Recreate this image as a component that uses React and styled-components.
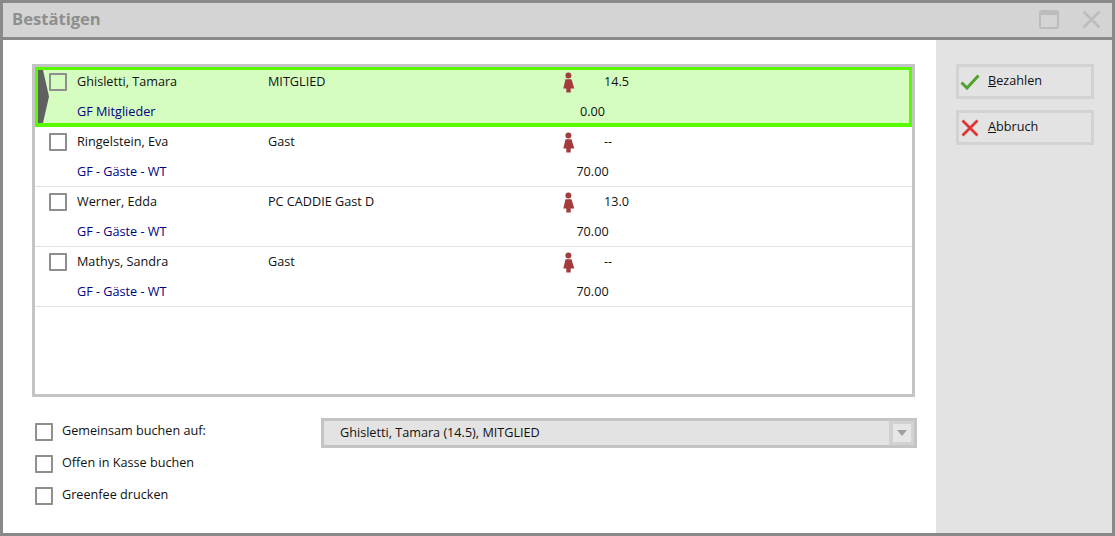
import React from "react";
import styled, { createGlobalStyle } from "styled-components";

const Global = createGlobalStyle`
  html, body { margin: 0; padding: 0; background: #fff; }
  body { font-family: "Open Sans", "Liberation Sans", sans-serif; font-size: 12.65px; color: #111; }
`;

const Window = styled.div`
  width: 1115px;
  height: 536px;
  box-sizing: border-box;
  border: 3px solid #898989;
  display: flex;
  flex-direction: column;
`;

const TitleBar = styled.div`
  height: 34px;
  flex: none;
  background: #d4d4d4;
  border-bottom: 3px solid #898989;
  display: flex;
  align-items: center;
  padding: 0 11px 0 9px;
`;

const Title = styled.div`
  flex: 1;
  font-size: 16.6px;
  font-weight: 700;
  color: #8e8e8e;
  margin-top: -4px;
`;

const TitleIcons = styled.div`
  display: flex;
  align-items: center;
  gap: 23px;
  margin-top: -2px;
`;

const Main = styled.div`
  flex: 1;
  display: flex;
  min-height: 0;
`;

const Content = styled.div`
  width: 933px;
  box-sizing: border-box;
  padding: 24px 19px 0 29px;
  background: #fff;
`;

const List = styled.div`
  width: 883px;
  height: 333px;
  box-sizing: border-box;
  border: 3px solid #c4c4c4;
`;

const Row = styled.div`
  position: relative;
  height: 60px;
  box-sizing: border-box;
  padding-left: 14px;
  background: ${(p) => (p.$active ? "#d5fdc0" : "#fff")};
  border-bottom: 1px solid ${(p) => (p.$active ? "#58fa00" : "#e2e2e2")};
  box-shadow: ${(p) => (p.$active ? "inset 3px 3px 0 #58fa00, inset -3px -3px 0 #58fa00" : "none")};
`;

const Marker = styled.svg`
  position: absolute;
  left: 3px;
  top: 3px;
`;

const Line = styled.div`
  height: 30px;
  box-sizing: border-box;
  padding-bottom: 2px;
  display: flex;
  align-items: center;
`;

const Box = styled.span`
  flex: none;
  width: 18px;
  height: 18px;
  box-sizing: border-box;
  border: 2px solid #8e8e8e;
  border-radius: 1px;
  margin-top: 2px;
  margin-right: ${(p) => p.$gap || 10}px;
`;

const Name = styled.span`
  width: 191px;
  flex: none;
`;

const Kind = styled.span`
  width: 295px;
  flex: none;
`;

const GenderCell = styled.span`
  width: 41px;
  flex: none;
  display: flex;
  margin-top: 2px;
`;

const Tariff = styled.span`
  width: 485px;
  flex: none;
  margin-left: 28px;
  color: #000080;
`;

const Price = styled.span`
  width: 61px;
  flex: none;
  text-align: center;
`;

const Options = styled.div`
  display: flex;
  margin-top: 21px;
  padding-left: 3px;
`;

const Checks = styled.div`
  width: 286px;
  flex: none;
  display: flex;
  flex-direction: column;
`;

const CheckRow = styled.div`
  height: 32px;
  box-sizing: border-box;
  padding-bottom: 2px;
  display: flex;
  align-items: center;
  margin-top: ${(p) => (p.$first ? "-2px" : "0")};
`;

const CheckLabel = styled.span`
  margin-top: -2px;
`;

const Combo = styled.div`
  width: 596px;
  height: 30px;
  box-sizing: border-box;
  border: 3px solid #c4c4c4;
  background: #e3e3e3;
  display: flex;
  align-items: center;
  justify-content: space-between;
  padding-left: 16px;
`;

const ComboText = styled.span`
  margin-top: -2px;
`;

const ComboButton = styled.div`
  width: 25px;
  height: 24px;
  box-sizing: border-box;
  border: 3px solid #d2d2d2;
  border-left: 4px solid #d0d0d0;
  background: #e6e6e6;
  display: flex;
  align-items: center;
  justify-content: center;
`;

const Arrow = styled.span`
  width: 0;
  height: 0;
  border-left: 5px solid transparent;
  border-right: 5px solid transparent;
  border-top: 6px solid #a0a0a0;
`;

const Side = styled.div`
  flex: 1;
  background: #e3e3e3;
  padding: 24px 0 0 20px;
  display: flex;
  flex-direction: column;
  gap: 11px;
`;

const Button = styled.div`
  width: 138px;
  height: 35px;
  box-sizing: border-box;
  border: 3px solid #d2d2d2;
  padding-bottom: 4px;
  display: flex;
  align-items: center;
  padding-left: 1px;
  gap: 8px;
`;

const IconSlot = styled.span`
  width: 20px;
  display: flex;
  justify-content: center;
  margin-top: 4px;
`;

const Key = styled.span`
  text-decoration: underline;
`;

const players = [
  { name: "Ghisletti, Tamara", kind: "MITGLIED", hcp: "14.5", tariff: "GF Mitglieder", price: "0.00", active: true },
  { name: "Ringelstein, Eva", kind: "Gast", hcp: "--", tariff: "GF - Gäste - WT", price: "70.00" },
  { name: "Werner, Edda", kind: "PC CADDIE Gast D", hcp: "13.0", tariff: "GF - Gäste - WT", price: "70.00" },
  { name: "Mathys, Sandra", kind: "Gast", hcp: "--", tariff: "GF - Gäste - WT", price: "70.00" },
];

function Lady() {
  return (
    <svg width="12" height="21" viewBox="0 0 12 21">
      <circle cx="5.4" cy="3.5" r="3" fill="#a33c3c" />
      <path d="M2.5 7.2h6l2.8 9.3H7.7v4H3.3v-4H.3z" fill="#a33c3c" />
    </svg>
  );
}

export default function App() {
  return (
    <Window>
      <Global />
      <TitleBar>
        <Title>Bestätigen</Title>
        <TitleIcons>
          <svg width="20" height="19" viewBox="0 0 20 19" fill="none">
            <rect x="1" y="1" width="18" height="17" rx="1.5" stroke="#bcbcbc" strokeWidth="2" />
            <rect x="1" y="1" width="18" height="4" fill="#bcbcbc" />
          </svg>
          <svg width="19" height="19" viewBox="0 0 19 19" fill="none">
            <path d="M1.5 1.5l16 16M17.5 1.5l-16 16" stroke="#bcbcbc" strokeWidth="2.6" />
          </svg>
        </TitleIcons>
      </TitleBar>
      <Main>
        <Content>
          <List>
            {players.map((p) => (
              <Row key={p.name} $active={p.active}>
                {p.active && (
                  <Marker width="11" height="53" viewBox="0 0 11 53">
                    <path d="M0 0h5l6 26.5L5 53H0z" fill="#606060" />
                  </Marker>
                )}
                <Line>
                  <Box />
                  <Name>{p.name}</Name>
                  <Kind>{p.kind}</Kind>
                  <GenderCell>
                    <Lady />
                  </GenderCell>
                  <span>{p.hcp}</span>
                </Line>
                <Line>
                  <Tariff>{p.tariff}</Tariff>
                  <Price>{p.price}</Price>
                </Line>
              </Row>
            ))}
          </List>
          <Options>
            <Checks>
              <CheckRow $first>
                <Box $gap={9} />
                <CheckLabel>Gemeinsam buchen auf:</CheckLabel>
              </CheckRow>
              <CheckRow>
                <Box $gap={9} />
                <CheckLabel>Offen in Kasse buchen</CheckLabel>
              </CheckRow>
              <CheckRow>
                <Box $gap={9} />
                <CheckLabel>Greenfee drucken</CheckLabel>
              </CheckRow>
            </Checks>
            <Combo>
              <ComboText>Ghisletti, Tamara (14.5), MITGLIED</ComboText>
              <ComboButton>
                <Arrow />
              </ComboButton>
            </Combo>
          </Options>
        </Content>
        <Side>
          <Button>
            <IconSlot>
              <svg width="20" height="16" viewBox="0 0 20 16" fill="none">
                <path d="M1.5 8.5l5.5 5.5L18.5 1.5" stroke="#4fa32c" strokeWidth="3" />
              </svg>
            </IconSlot>
            <span>
              <Key>B</Key>ezahlen
            </span>
          </Button>
          <Button>
            <IconSlot>
              <svg width="18" height="18" viewBox="0 0 18 18" fill="none">
                <path d="M1.5 1.5l15 15M16.5 1.5l-15 15" stroke="#e03535" strokeWidth="2.8" />
              </svg>
            </IconSlot>
            <span>
              <Key>A</Key>bbruch
            </span>
          </Button>
        </Side>
      </Main>
    </Window>
  );
}
